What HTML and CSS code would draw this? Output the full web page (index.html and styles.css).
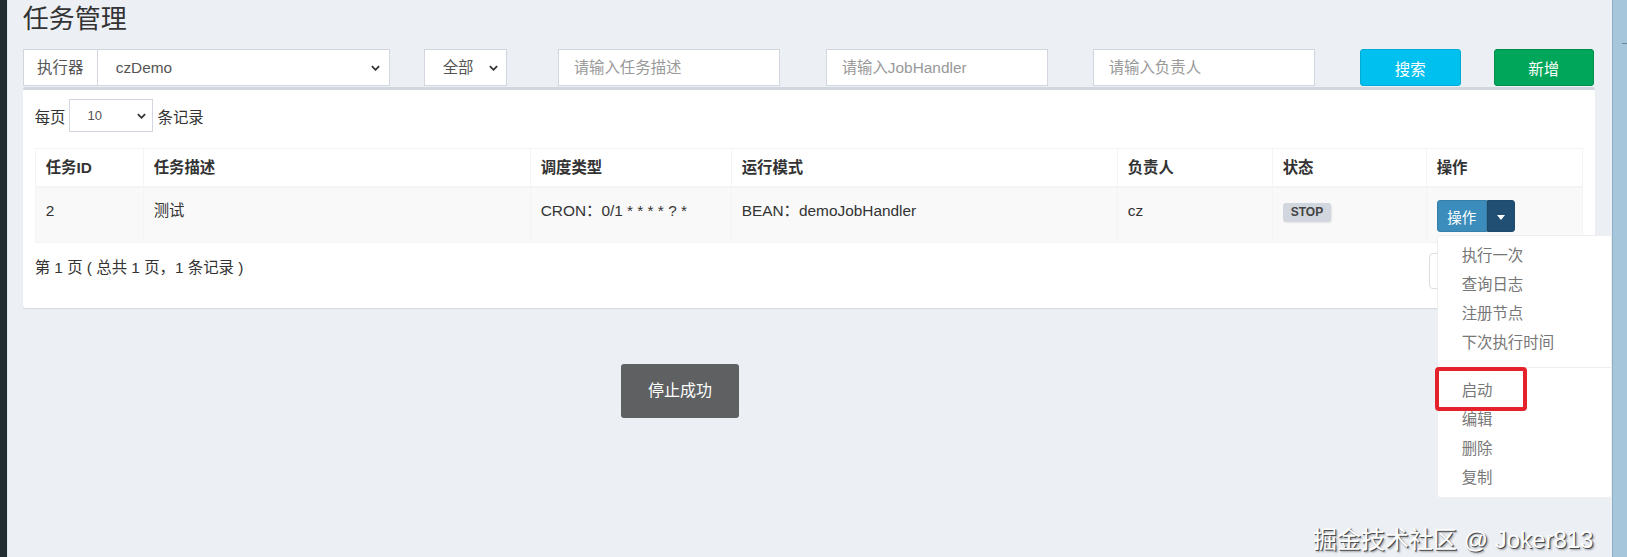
FILE: index.html
```html
<!DOCTYPE html>
<html>
    <head>
        <meta charset="UTF-8">
        <title>任务管理</title>
        <link rel="stylesheet" href="styles.css">
    </head>
    <body>
        <div class="sidebar"></div>

        <div class="content-wrapper">
            <h1 class="page-title">任务管理</h1>

            <div class="filter-bar">
                <div class="input-group">
                    <span class="addon">执行器</span>
                    <div class="select-wrap">
                        <select class="form-control"><option>czDemo</option></select>
                        <svg class="chevron" viewBox="0 0 10 6"><path d="M1 1 L5 5 L9 1"/></svg>
                    </div>
                </div>
                <div class="select-wrap status-select">
                    <select class="form-control"><option>全部</option></select>
                    <svg class="chevron" viewBox="0 0 10 6"><path d="M1 1 L5 5 L9 1"/></svg>
                </div>
                <input class="form-control job-input first" type="text" placeholder="请输入任务描述">
                <input class="form-control job-input" type="text" placeholder="请输入JobHandler">
                <input class="form-control job-input" type="text" placeholder="请输入负责人">
                <button class="btn btn-info">搜索</button>
                <button class="btn btn-success">新增</button>
            </div>

            <div class="box">
                <div class="length-row">
                    每页
                    <div class="select-wrap length-select">
                        <select class="form-control"><option>10</option></select>
                        <svg class="chevron" viewBox="0 0 10 6"><path d="M1 1 L5 5 L9 1"/></svg>
                    </div>
                    条记录
                </div>

                <table class="job-table">
                    <colgroup>
                        <col style="width: 108px">
                        <col style="width: 387px">
                        <col style="width: 201px">
                        <col style="width: 386px">
                        <col style="width: 155px">
                        <col style="width: 154px">
                        <col style="width: 156px">
                    </colgroup>
                    <thead>
                        <tr>
                            <th>任务ID</th>
                            <th>任务描述</th>
                            <th>调度类型</th>
                            <th>运行模式</th>
                            <th>负责人</th>
                            <th>状态</th>
                            <th>操作</th>
                        </tr>
                    </thead>
                    <tbody>
                        <tr>
                            <td>2</td>
                            <td>测试</td>
                            <td>CRON：0/1 * * * * ? *</td>
                            <td>BEAN：demoJobHandler</td>
                            <td>cz</td>
                            <td><span class="label">STOP</span></td>
                            <td>
                                <div class="btn-group">
                                    <button class="btn-op">操作</button>
                                    <button class="btn-caret"><span class="caret"></span></button>
                                    <ul class="dropdown-menu">
                                        <li>执行一次</li>
                                        <li>查询日志</li>
                                        <li>注册节点</li>
                                        <li>下次执行时间</li>
                                        <li class="divider"></li>
                                        <li class="marked">启动<span class="mark"></span></li>
                                        <li>编辑</li>
                                        <li>删除</li>
                                        <li>复制</li>
                                    </ul>
                                </div>
                            </td>
                        </tr>
                    </tbody>
                </table>

                <div class="info-row">
                    <div class="info">第 1 页 ( 总共 1 页，1 条记录 )</div>
                    <ul class="pagination">
                        <li>上页</li>
                        <li class="active">1</li>
                        <li>下页</li>
                    </ul>
                </div>
            </div>
        </div>

        <div class="rightbar"><span class="dash"></span></div>

        <div class="toast">停止成功</div>
        <div class="watermark">掘金技术社区 @ Joker813</div>
    </body>
</html>
```

FILE: styles.css
```css
body {
    margin: 0;
    height: 557px;
    display: flex;
    position: relative;
    overflow: hidden;
    background-color: #ecf0f5;
    font-family: "Liberation Sans", "Noto Sans CJK SC", sans-serif;
    font-size: 15.4px;
    color: #333;
}
.sidebar {
    width: 7px;
    background-color: #222d32;
    border-right: 1px solid #e2e7ee;
}
.content-wrapper {
    flex: 1;
    padding: 0 17px 0 15px;
}
.rightbar {
    width: 15px;
    background-color: #a5c6db;
    border-left: 1px solid #8eb0c6;
}
.rightbar .dash {
    display: block;
    height: 1px;
    margin: 43px 0 0 9px;
    background-color: #6d8798;
}
.page-title {
    margin: 0;
    font-size: 26px;
    font-weight: normal;
    line-height: 38px;
    color: #333;
}

/* filters */
.filter-bar {
    display: flex;
    height: 37px;
    margin-top: 11px;
}
.form-control {
    box-sizing: border-box;
    height: 100%;
    border: 1px solid #d2d6de;
    border-radius: 0;
    background-color: #fff;
    font-family: inherit;
    font-size: 15.4px;
    color: #555;
    outline: none;
}
.form-control::placeholder {
    color: #999;
}
.input-group {
    display: flex;
    width: 367px;
}
.addon {
    box-sizing: border-box;
    width: 75px;
    border: 1px solid #d2d6de;
    background-color: #fff;
    color: #555;
    text-align: center;
    line-height: 35px;
}
.select-wrap {
    position: relative;
    flex: 1;
}
.select-wrap select {
    width: 100%;
    padding: 0 0 0 18px;
    -webkit-appearance: none;
    appearance: none;
}
.input-group .select-wrap select {
    border-left: none;
}
.chevron {
    position: absolute;
    right: 10px;
    top: 50%;
    width: 9px;
    height: 6px;
    margin-top: -3px;
    fill: none;
    stroke: #333;
    stroke-width: 2;
}
.status-select {
    flex: none;
    width: 83px;
    margin-left: 34px;
}
.status-select .chevron {
    right: 9px;
}
.job-input {
    width: 222px;
    margin-left: 46px;
    padding: 0 15px;
}
.job-input.first {
    margin-left: 51px;
}
.job-input:last-of-type {
    margin-left: 45px;
}
.btn {
    height: 37px;
    border: 1px solid transparent;
    border-radius: 3px;
    color: #fff;
    font-family: inherit;
    font-size: 15.4px;
}
.btn-info {
    width: 101px;
    margin-left: 45px;
    background-color: #00c0ef;
    border-color: #00acd6;
}
.btn-success {
    width: 100px;
    margin-left: 33px;
    background-color: #00a65a;
    border-color: #008d4c;
}

/* box */
.box {
    margin-top: 1px;
    padding: 9px 12px 19px;
    background-color: #fff;
    border-top: 3px solid #d2d6de;
    border-radius: 3px;
    box-shadow: 0 1px 1px rgba(0, 0, 0, 0.1);
}
.length-row {
    display: flex;
    align-items: center;
    height: 33px;
    color: #333;
}
.length-select {
    flex: none;
    width: 84px;
    height: 33px;
    margin: 0 4px;
}
.length-select select {
    padding-left: 17px;
    font-size: 13px;
    color: #555;
}
.length-select .chevron {
    right: 7px;
}

.job-table {
    width: 100%;
    margin-top: 16px;
    border-collapse: collapse;
    table-layout: fixed;
}
.job-table th,
.job-table td {
    border: 1px solid #f4f4f4;
    text-align: left;
    vertical-align: top;
    line-height: 22px;
}
.job-table th {
    padding: 8px 10px 7px;
    border-bottom-width: 2px;
    font-weight: bold;
    color: #333;
}
.job-table td {
    padding: 12px 10px 10px;
    background-color: #f9f9f9;
}
.label {
    display: inline-block;
    padding: 0 8px;
    margin-top: 1px;
    border-radius: 3px;
    background-color: #d2d6de;
    color: #444;
    font-size: 12px;
    font-weight: bold;
    line-height: 19px;
    box-shadow: 1px 1px 2px rgba(0, 0, 0, 0.08);
}

/* action button */
.btn-group {
    position: relative;
    display: inline-flex;
    height: 32px;
}
.btn-op,
.btn-caret {
    border: 1px solid #367fa9;
    color: #fff;
    font-family: inherit;
    font-size: 14.5px;
}
.btn-op {
    width: 50px;
    border-radius: 3px 0 0 3px;
    background-color: #3c8dbc;
}
.btn-caret {
    width: 28px;
    border-color: #1f4a6b;
    border-radius: 0 3px 3px 0;
    background-color: #214f74;
}
.caret {
    display: inline-block;
    border-top: 5px solid #fff;
    border-left: 4px solid transparent;
    border-right: 4px solid transparent;
    vertical-align: middle;
}
.dropdown-menu {
    position: absolute;
    top: 35px;
    left: 0;
    z-index: 10;
    box-sizing: border-box;
    width: 175px;
    margin: 0;
    padding: 5px 0;
    list-style: none;
    background-color: #fff;
    border: 1px solid #eee;
    border-radius: 3px;
}
.dropdown-menu li {
    padding: 0 24px;
    line-height: 29px;
    color: #777;
    white-space: nowrap;
}
.dropdown-menu .divider {
    height: 1px;
    margin: 10px 0 8px;
    padding: 0;
    background-color: #eee;
}
.dropdown-menu .marked {
    position: relative;
}
.mark {
    position: absolute;
    left: -3px;
    top: -9px;
    width: 92px;
    height: 44px;
    box-sizing: border-box;
    border: 4px solid #e3222c;
    border-radius: 4px;
}

.info-row {
    display: flex;
    justify-content: space-between;
    height: 36px;
    margin-top: 10px;
}
.info {
    padding-top: 4px;
    line-height: 22px;
}
.pagination {
    display: flex;
    width: 153px;
    margin: 0;
    padding: 0;
    list-style: none;
}
.pagination li {
    flex: 1;
    border: 1px solid #ddd;
    margin-left: -1px;
    text-align: center;
    line-height: 34px;
    color: #777;
}
.pagination li:first-child {
    border-radius: 4px 0 0 4px;
}
.pagination li:last-child {
    border-radius: 0 4px 4px 0;
}

/* overlays */
.toast {
    position: absolute;
    left: 621px;
    top: 364px;
    width: 118px;
    height: 54px;
    border-radius: 3px;
    background-color: rgba(0, 0, 0, 0.6);
    color: #fff;
    font-size: 16px;
    line-height: 54px;
    text-align: center;
}
.watermark {
    position: absolute;
    left: 1313px;
    top: 525px;
    font-size: 24px;
    line-height: 30px;
    color: #fff;
    white-space: nowrap;
    text-shadow: 1px 1px 0 #4a4a4a, 2px 2px 2px rgba(0, 0, 0, 0.35);
}
```
